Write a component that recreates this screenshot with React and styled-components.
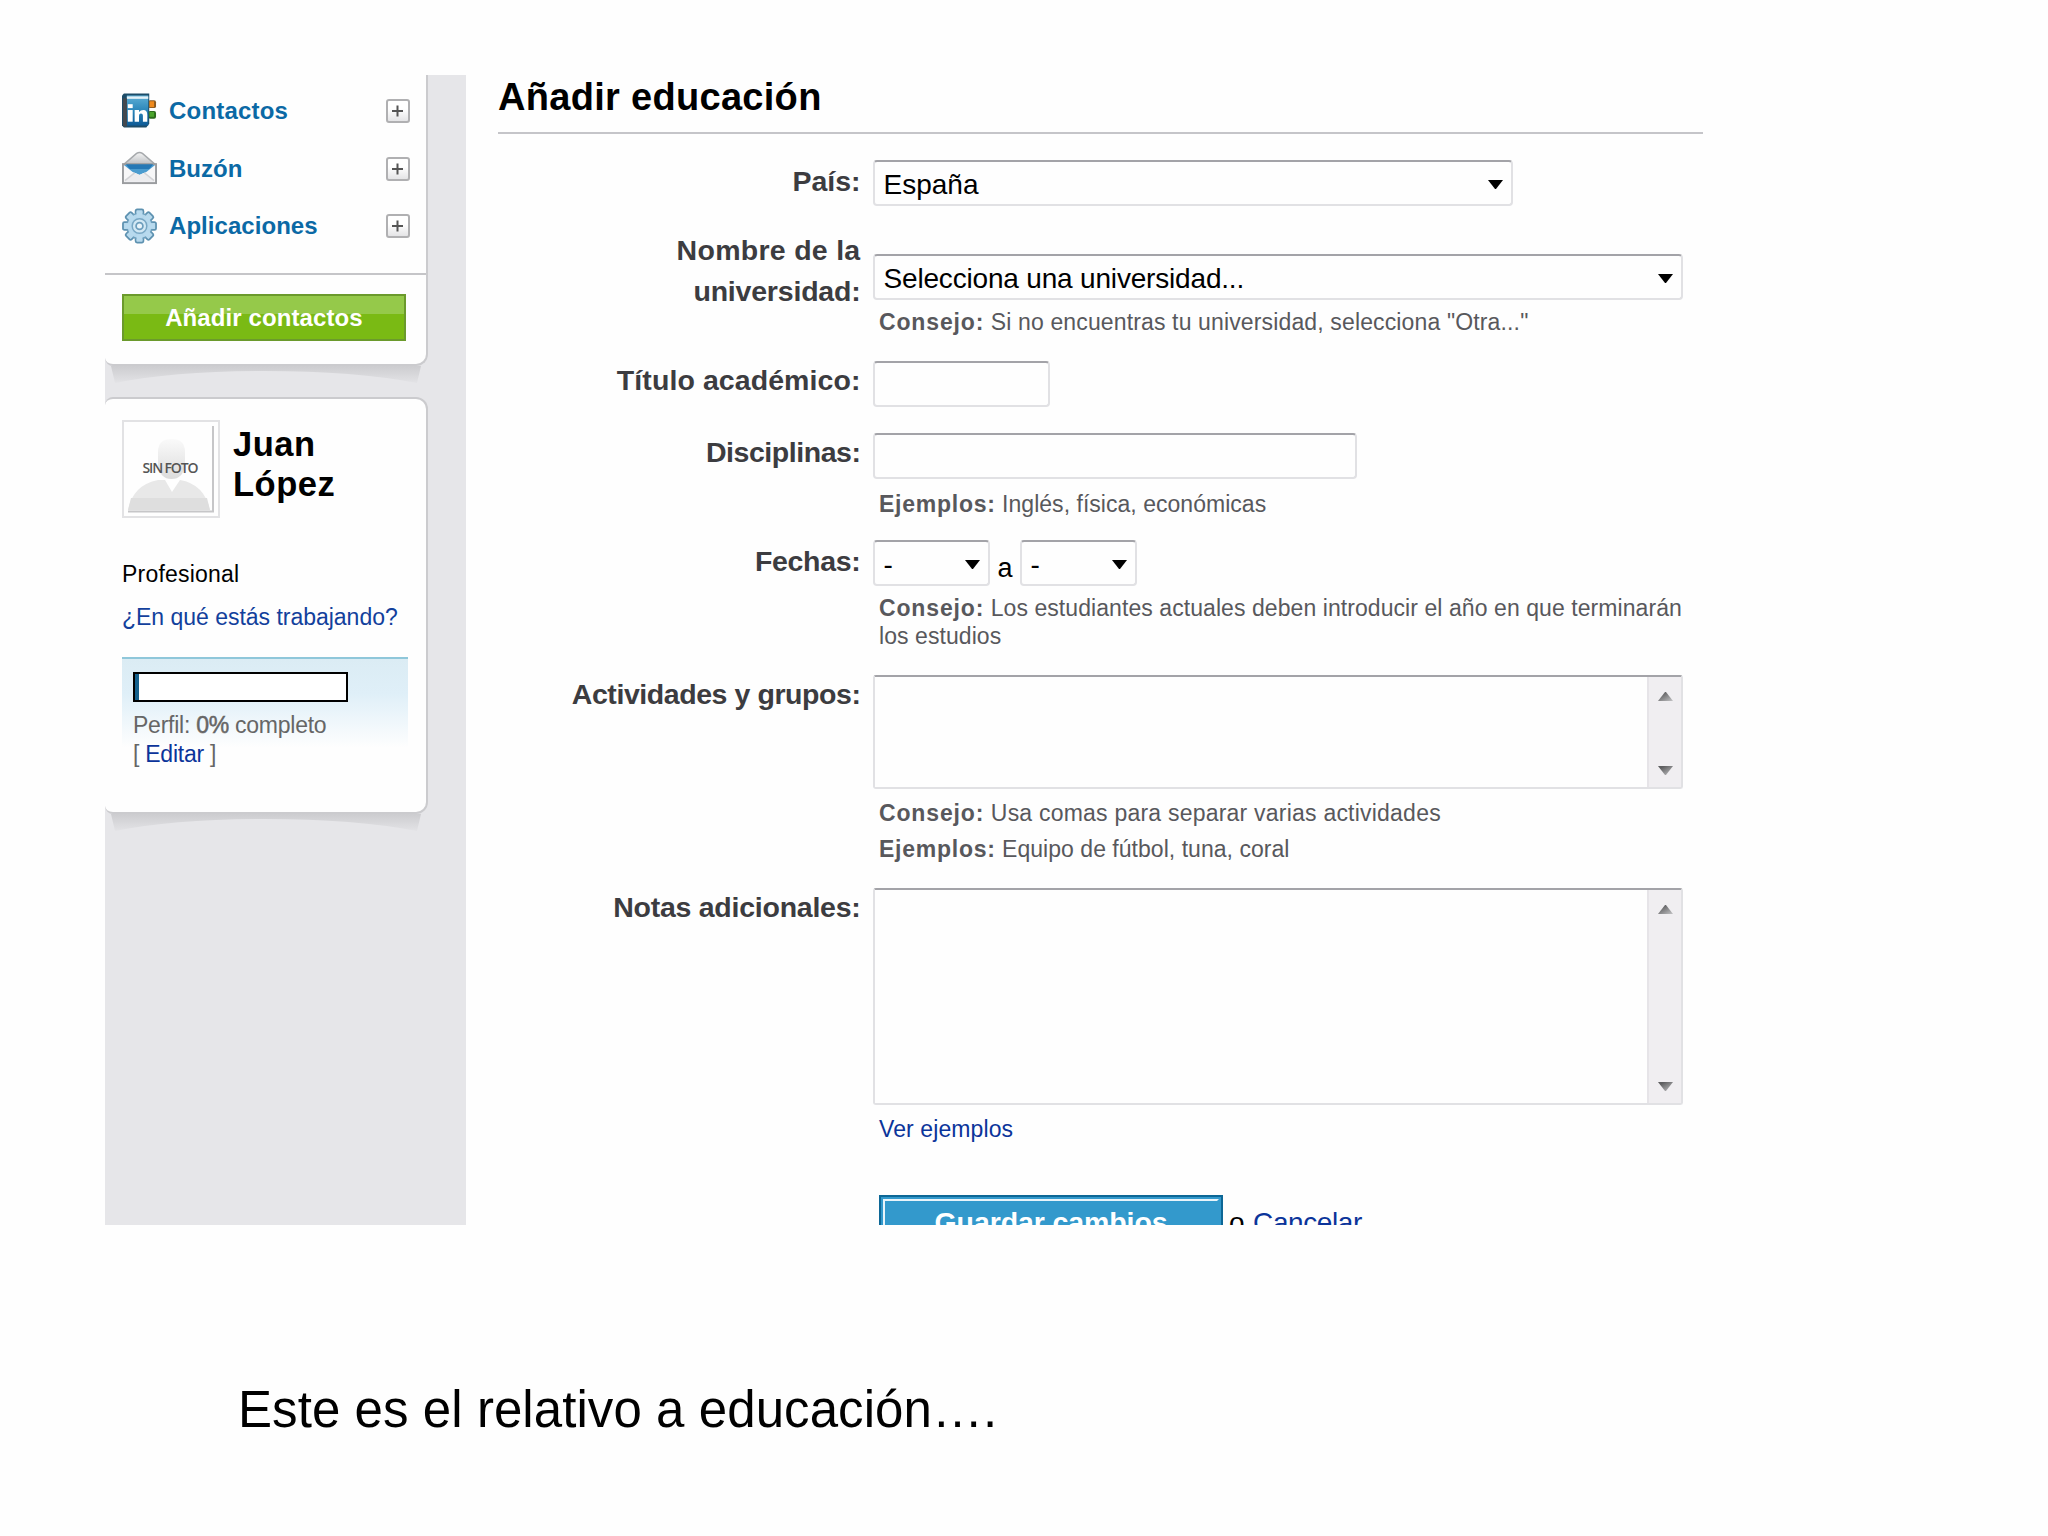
import React from 'react'
import styled, { createGlobalStyle } from 'styled-components'

const NavIconContacts = () => (
  <svg width="35" height="36" viewBox="0 0 36 36">
    <defs>
      <linearGradient id="book" x1="0" y1="0" x2="0" y2="1">
        <stop offset="0" stopColor="#5fb0d6" />
        <stop offset="0.5" stopColor="#2b86ba" />
        <stop offset="1" stopColor="#0d5a96" />
      </linearGradient>
    </defs>
    <rect x="27" y="7" width="8" height="8" rx="2" fill="#8a5a20" />
    <rect x="28" y="8" width="5" height="6" fill="#f08a1c" />
    <rect x="27" y="18" width="8" height="8" rx="2" fill="#2c6b1c" />
    <rect x="28" y="19" width="5" height="5" fill="#4ba52c" />
    <path d="M0 2 L2 0 H28 V31 L25 35 H2 L0 33 Z" fill="#1d4c68" />
    <rect x="5" y="2" width="22" height="31" fill="url(#book)" />
    <rect x="5" y="3" width="22" height="2.500" fill="#e3f1f8" />
    <rect x="1" y="5" width="4" height="29" fill="#44484e" />
    <rect x="6" y="11" width="5" height="4" fill="#fff" />
    <rect x="6" y="17" width="5" height="12" fill="#fff" />
    <path d="M13 17 H17.500 V19 Q19 17 22 17 Q26 17 26 22 V29 H21.500 V22.500 Q21.500 20.500 19.500 20.500 Q17.500 20.500 17.500 23 V29 H13 Z" fill="#fff" />
  </svg>
)

const NavIconMail = () => (
  <svg width="35" height="36" viewBox="0 0 36 36">
    <defs>
      <linearGradient id="flap" x1="0" y1="0" x2="0" y2="1">
        <stop offset="0" stopColor="#f4f4f4" />
        <stop offset="1" stopColor="#b9bcc0" />
      </linearGradient>
    </defs>
    <path d="M1 14 L15 2 Q18 0 21 2 L35 14 Z" fill="url(#flap)" stroke="#a6a9ac" strokeWidth="1.500" />
    <rect x="1" y="13" width="34" height="19.500" fill="#f7f7f8" stroke="#9a9c9f" strokeWidth="2" />
    <path d="M2 14 H34 L25 21 L18 24 L11 21 Z" fill="#4b9ccf" />
    <path d="M4 13 H32 L28 18 H8 Z" fill="#2578b5" />
    <path d="M2 31 L14 22 L18 24.500 L22 22 L34 31 Z" fill="#ececee" />
    <path d="M3 30 L13 22 M33 30 L23 22" stroke="#d2d3d6" strokeWidth="1.500" />
  </svg>
)

const teeth = [0, 45, 90, 135, 180, 225, 270, 315]

const NavIconGear = () => (
  <svg width="35" height="36" viewBox="0 0 36 36">
    {teeth.map((a) => (
      <rect key={a} x="14" y="1" width="8" height="8" rx="1.500" fill="#b8d9ec" stroke="#5d91b0" strokeWidth="1.800" transform={`rotate(${a} 18 18)`} />
    ))}
    <circle cx="18" cy="18" r="13" fill="#b4d7ec" stroke="#6d9fbd" strokeWidth="1.500" />
    {teeth.map((a) => (
      <rect key={a} x="15" y="3" width="6" height="6" fill="#b8daee" transform={`rotate(${a} 18 18)`} />
    ))}
    <circle cx="18" cy="18" r="7.500" fill="#d2e8f4" stroke="#78a7c4" strokeWidth="1.500" />
    <circle cx="18" cy="18" r="3.500" fill="#e9f4fa" stroke="#6d9ebd" strokeWidth="1.800" />
  </svg>
)

const PlusIcon = () => (
  <svg width="24" height="24" viewBox="0 0 24 24">
    <defs>
      <linearGradient id="plusFill" x1="0" y1="0" x2="0" y2="1">
        <stop offset="0.4" stopColor="#fff" />
        <stop offset="1" stopColor="#e2e2e4" />
      </linearGradient>
    </defs>
    <rect x="1" y="1" width="22" height="22" rx="2" fill="url(#plusFill)" stroke="#b0b0b2" strokeWidth="2" />
    <path d="M6 12 H17 M11.500 6.500 V17.500" stroke="#555" strokeWidth="2" />
  </svg>
)

const NoPhoto = () => (
  <svg width="94" height="94" viewBox="0 0 94 94">
    <defs>
      <linearGradient id="head" x1="0" y1="0" x2="0" y2="1">
        <stop offset="0" stopColor="#fafafa" />
        <stop offset="1" stopColor="#dcdcdc" />
      </linearGradient>
    </defs>
    <path d="M34 30 Q34 17 47.500 17 Q61 17 61 30 V43 Q59 57 47.500 57 Q36 57 34 43 Z" fill="url(#head)" />
    <path d="M4 88 Q9 63 34 58 L41 58 L48 70 L56 58 Q80 62 86 88 Z" fill="#e8e8e8" />
    <path d="M7 76 H83 L86 88 H4 Z" fill="#dedede" />
    <path d="M89 4 V89.500 H4" fill="none" stroke="#c6c6c8" strokeWidth="2" />
    <text x="46.500" y="51" textAnchor="middle" fontFamily="Open Sans, sans-serif" fontSize="14" fontWeight="600" textLength="56" fill="#555">SIN FOTO</text>
  </svg>
)

const CardShadow = () => (
  <svg width="322" height="20" viewBox="0 0 322 20">
    <defs>
      <linearGradient id="curl" x1="0" y1="0" x2="0" y2="1">
        <stop offset="0" stopColor="#c6c6c9" />
        <stop offset="1" stopColor="#e2e2e5" />
      </linearGradient>
    </defs>
    <path d="M6 0 H316 L312 17 Q250 5 160 5 Q70 5 10 17 Z" fill="url(#curl)" opacity="0.8" />
  </svg>
)

const Arrow = ({ up, gray }) => (
  <svg width="15" height="9" viewBox="0 0 15 9">
    <defs>
      <linearGradient id="tip" x1="0" y1="0" x2="1" y2="1">
        <stop offset="0.200" stopColor="#5e5e60" />
        <stop offset="1" stopColor="#c4c4c6" />
      </linearGradient>
    </defs>
    <path d={up ? 'M0 9 H15 L8 0 H7 Z' : 'M0 0 H15 L8 9 H7 Z'} fill={gray ? 'url(#tip)' : '#000'} />
  </svg>
)

const navItems = [
  { name: 'Contactos', icon: <NavIconContacts />, track: 0.2 },
  { name: 'Buzón', icon: <NavIconMail />, track: 0 },
  { name: 'Aplicaciones', icon: <NavIconGear />, track: 0.05 },
]

const Select = ({ width, track, children }) => (
  <SelectBox $width={width}>
    <Value $track={track}>{children}</Value>
    <Arrow />
  </SelectBox>
)

const ScrollArea = ({ height }) => (
  <AreaFrame $height={height}>
    <Area />
    <ScrollBar>
      <Arrow up gray />
      <Arrow gray />
    </ScrollBar>
  </AreaFrame>
)

const App = () => {
  return (
    <Slide>
      <GlobalStyle />
      <Screen>
        <Sidebar>
          <NavCard>
            <NavList>
              {navItems.map((item) => (
                <NavItem key={item.name}>
                  {item.icon}
                  <NavText $track={item.track}>{item.name}</NavText>
                  <PlusIcon />
                </NavItem>
              ))}
            </NavList>
            <AddButton>Añadir contactos</AddButton>
          </NavCard>
          <CardShadow />
          <ProfileCard>
            <Person>
              <Photo><NoPhoto /></Photo>
              <PersonName>Juan<br />López</PersonName>
            </Person>
            <Role>Profesional</Role>
            <WorkLink>¿En qué estás trabajando?</WorkLink>
            <Progress>
              <Bar><BarFill /></Bar>
              <ProgressText>Perfil: <Percent>0%</Percent> completo</ProgressText>
              <ProgressText $edit>[ <Anchor>Editar</Anchor> ]</ProgressText>
            </Progress>
          </ProfileCard>
          <CardShadow />
        </Sidebar>
        <Main>
          <Title>Añadir educación</Title>
          <Row $height={70}>
            <Label $top={1} $track={0}>País:</Label>
            <Select width={640} track={0}>España</Select>
          </Row>
          <Row $height={131}>
            <Label>
              <LabelLine $track={0.28}>Nombre de la</LabelLine>
              <LabelLine $track={-0.2}>universidad:</LabelLine>
            </Label>
            <Field $top={24}>
              <Select width={810} track={-0.18}>Selecciona una universidad...</Select>
              <Hint $gap={8} $track={0.14}><b>Consejo:</b> Si no encuentras tu universidad, selecciona "Otra..."</Hint>
            </Field>
          </Row>
          <Row $height={72}>
            <Label $top={-1} $track={0.08}>Título académico:</Label>
            <TextInput $width={177} />
          </Row>
          <Row $height={107}>
            <Label $top={-1} $track={-0.45}>Disciplinas:</Label>
            <Field>
              <TextInput $width={484} />
              <Hint $gap={11} $track={0.03} $boldTrack={0.75}><b>Ejemplos:</b> Inglés, física, económicas</Hint>
            </Field>
          </Row>
          <Row $height={135}>
            <Label $top={1} $track={-0.3}>Fechas:</Label>
            <Field>
              <Dates>
                <Select width={117}>-</Select>
                <To>a</To>
                <Select width={117}>-</Select>
              </Dates>
              <Hint $gap={7} $track={0.07} $tight>
                <b>Consejo:</b> Los estudiantes actuales deben introducir el año en que terminarán<br />los estudios
              </Hint>
            </Field>
          </Row>
          <Row $height={213}>
            <Label $top={-1} $track={-0.43}>Actividades y grupos:</Label>
            <Field>
              <ScrollArea height={114} />
              <Hint $gap={9.5} $track={0.22}><b>Consejo:</b> Usa comas para separar varias actividades</Hint>
              <Hint $gap={8} $track={0.03} $boldTrack={0.75}><b>Ejemplos:</b> Equipo de fútbol, tuna, coral</Hint>
            </Field>
          </Row>
          <Row $height={307}>
            <Label $top={-1} $track={-0.25}>Notas adicionales:</Label>
            <Field>
              <ScrollArea height={217} />
              <Hint $gap={9.5} $track={0.1}><Anchor>Ver ejemplos</Anchor></Hint>
            </Field>
          </Row>
          <Actions>
            <SaveButton><SaveInner>Guardar cambios</SaveInner></SaveButton>
            <Or>o</Or>
            <Cancel>Cancelar</Cancel>
          </Actions>
        </Main>
      </Screen>
      <Caption>Este es el relativo a educación….</Caption>
    </Slide>
  )
}

const GlobalStyle = createGlobalStyle`
  * {
    box-sizing: border-box;
  }
  body {
    margin: 0;
    background: #fefefe;
    font-family: "Liberation Sans", Arial, sans-serif;
  }
  svg {
    display: block;
    flex-shrink: 0;
  }
`

const Slide = styled.div`
  width: 2048px;
  height: 1536px;
  padding: 75px 0 0 105px;
  overflow: hidden;
`

const Screen = styled.div`
  display: flex;
  width: 1598px;
  height: 1150px;
  overflow: hidden;
`

const Sidebar = styled.div`
  width: 361px;
  flex-shrink: 0;
  background: #e6e6e9;
`

const NavCard = styled.div`
  width: 323px;
  height: 291px;
  background: #fefefe;
  border-right: 2px solid #cbcbce;
  border-bottom: 2px solid #cbcbce;
  border-radius: 0 0 12px 8px;
`

const NavList = styled.div`
  display: flex;
  flex-direction: column;
  gap: 21.5px;
  height: 200px;
  padding: 18px 16px 0 17px;
  border-bottom: 2px solid #c5c5c8;
`

const NavItem = styled.div`
  display: flex;
  align-items: center;
  height: 36px;
`

const NavText = styled.span`
  flex: 1;
  margin-left: 12px;
  font-size: 24px;
  font-weight: 700;
  line-height: 36px;
  letter-spacing: ${(p) => p.$track}px;
  color: #0b69a5;
`

const AddButton = styled.div`
  width: 284px;
  height: 47px;
  margin: 19px 0 0 17px;
  border: 2px solid #6b9a2c;
  background: linear-gradient(#95c94a 0 18px, #7aba14 18px);
  color: #fff;
  font-size: 24px;
  font-weight: 700;
  line-height: 43px;
  letter-spacing: 0.1px;
  text-align: center;
`

const ProfileCard = styled.div`
  width: 323px;
  height: 417px;
  margin-top: 11px;
  padding: 21px 0 0 17px;
  background: #fefefe;
  border: 2px solid #cbcbce;
  border-left: 0;
  border-radius: 8px 12px 12px 8px;
`

const Person = styled.div`
  display: flex;
  gap: 13px;
`

const Photo = styled.div`
  width: 98px;
  height: 98px;
  border: 2px solid #e2e2e4;
`

const PersonName = styled.div`
  padding-top: 3.5px;
  font-size: 34.5px;
  font-weight: 700;
  line-height: 40.5px;
  letter-spacing: 0.5px;
`

const Role = styled.div`
  margin-top: 42px;
  font-size: 23px;
  line-height: 29px;
  letter-spacing: 0.2px;
`

const WorkLink = styled.a`
  display: block;
  margin-top: 14px;
  font-size: 23px;
  line-height: 29px;
  letter-spacing: -0.02px;
  color: #12409c;
`

const Progress = styled.div`
  width: 286px;
  height: 116px;
  margin-top: 25px;
  padding: 13px 0 0 11px;
  border-top: 2px solid #8fc7da;
  background: linear-gradient(#dbecf4, #dfeff8 30%, #fefefe 78%);
`

const Bar = styled.div`
  width: 215px;
  height: 30px;
  border: 2px solid #000;
  background: #fff;
`

const BarFill = styled.div`
  width: 4px;
  height: 100%;
  background: #14608c;
`

const ProgressText = styled.div`
  margin-top: ${(p) => (p.$edit ? 0 : 9)}px;
  font-size: 23px;
  line-height: 28.5px;
  letter-spacing: -0.25px;
  color: #666;
`

const Percent = styled.span`
  -webkit-text-stroke: 0.5px #666;
`

const Anchor = styled.a`
  color: #0b349a;
`

const Main = styled.div`
  width: 1237px;
  padding-left: 32px;
`

const Title = styled.h1`
  height: 59px;
  margin: 0 0 26px;
  border-bottom: 2px solid #c5c5c9;
  font-size: 38px;
  line-height: 45px;
  letter-spacing: 0.3px;
`

const Row = styled.div`
  display: grid;
  grid-template-columns: 364px 830px;
  column-gap: 11px;
  align-items: start;
  height: ${(p) => p.$height}px;
`

const Label = styled.div`
  margin-top: ${(p) => p.$top || 0}px;
  padding-right: 1.5px;
  font-size: 28.5px;
  font-weight: 700;
  line-height: 40.5px;
  letter-spacing: ${(p) => p.$track || 0}px;
  text-align: right;
  color: #3c3c40;
`

const LabelLine = styled.div`
  letter-spacing: ${(p) => p.$track || 0}px;
`

const Field = styled.div`
  padding-top: ${(p) => p.$top || 0}px;
`

const SelectBox = styled.div`
  display: flex;
  align-items: center;
  justify-content: space-between;
  width: ${(p) => p.$width}px;
  height: 46px;
  padding: 3px 8.5px 0 8.5px;
  border: 2px solid #e1e1e4;
  border-top-color: #a3a3a8;
  border-radius: 4px;
  background: #fefefe;
`

const Value = styled.span`
  font-size: 28px;
  line-height: 40px;
  letter-spacing: ${(p) => p.$track || 0}px;
`

const TextInput = styled.input`
  display: block;
  width: ${(p) => p.$width}px;
  height: 46px;
  padding: 0 8px;
  border: 2px solid #e1e1e4;
  border-top-color: #a3a3a8;
  border-radius: 4px;
  background: #fefefe;
`

const Hint = styled.div`
  margin-top: ${(p) => p.$gap}px;
  padding-left: 6px;
  font-size: 23px;
  line-height: ${(p) => (p.$tight ? 27.5 : 28.5)}px;
  letter-spacing: ${(p) => p.$track || 0}px;
  white-space: nowrap;
  color: #58585c;
  b {
    letter-spacing: ${(p) => p.$boldTrack || 0.85}px;
  }
`

const Dates = styled.div`
  display: flex;
`

const To = styled.span`
  width: 30px;
  padding-top: 8px;
  font-size: 27px;
  line-height: 40px;
  text-align: center;
`

const AreaFrame = styled.div`
  display: flex;
  width: 810px;
  height: ${(p) => p.$height}px;
  border: 2px solid #e1e1e4;
  border-top-color: #a3a3a8;
  border-radius: 3px;
`

const Area = styled.textarea`
  flex: 1;
  border: 0;
  resize: none;
  background: #fefefe;
`

const ScrollBar = styled.div`
  display: flex;
  flex-direction: column;
  align-items: center;
  justify-content: space-between;
  width: 34px;
  padding: 15px 0 12px;
  border-left: 2px solid #e6e4e8;
  background: #f0eef1;
`

const Actions = styled.div`
  display: flex;
  align-items: flex-start;
  height: 60px;
  padding-left: 381px;
  font-size: 28px;
  line-height: 56px;
`

const SaveButton = styled.div`
  width: 344px;
  height: 60px;
  padding: 2px;
  border: 2px solid #0d6796;
  background: #3399cc;
`

const SaveInner = styled.div`
  height: 52px;
  border: 2px solid #e9f4fa;
  border-right-color: #3399cc;
  color: #fff;
  font-size: 28.5px;
  font-weight: 700;
  line-height: 43px;
  letter-spacing: -0.1px;
  text-align: center;
`

const Or = styled.span`
  margin: 0 9.5px 0 6px;
  letter-spacing: -1px;
`

const Cancel = styled.a`
  letter-spacing: -0.4px;
  color: #0b349a;
`

const Caption = styled.p`
  margin: 156px 0 0 133px;
  font-size: 51px;
  line-height: 58px;
  letter-spacing: 0.07px;
`

export default App
